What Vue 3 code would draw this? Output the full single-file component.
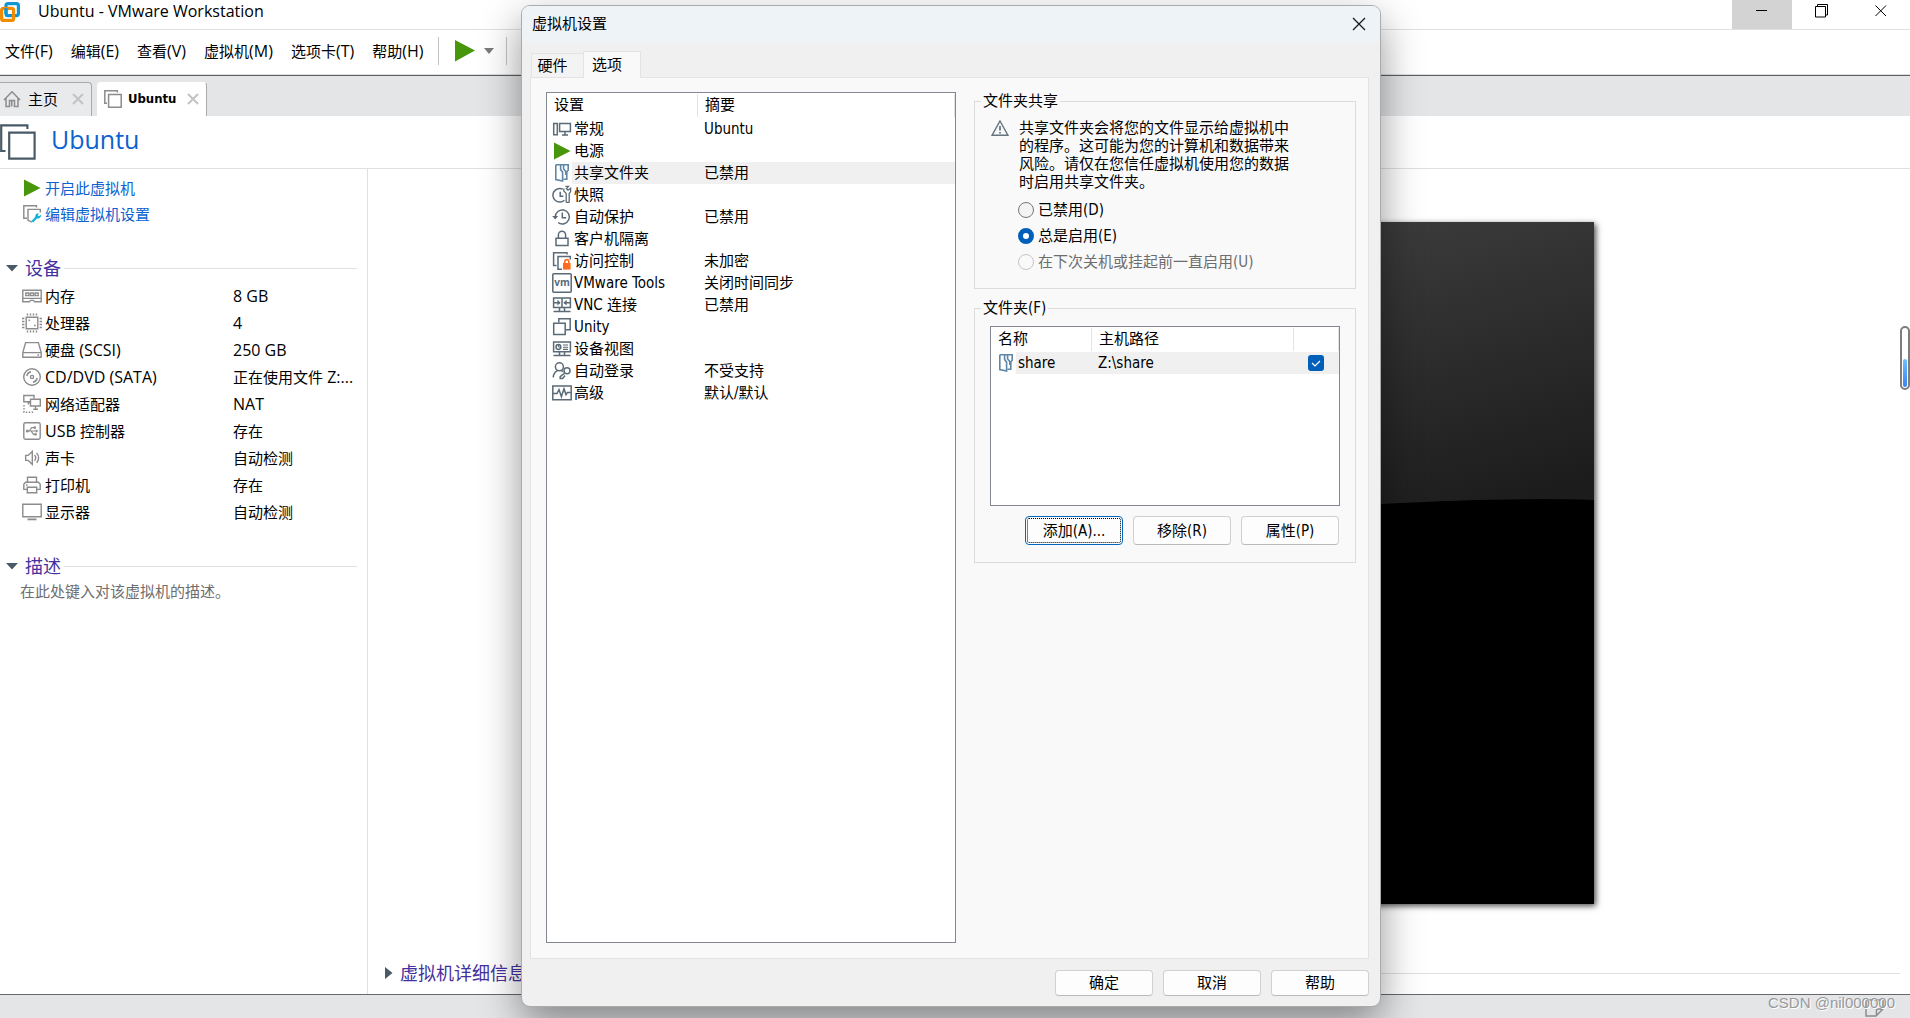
<script setup>
import { h, ref } from 'vue'

// Renders a label, wrapping its Latin runs so that they can have their own size.
const Txt = (props) =>
  h(
    'span',
    { class: 'txt' },
    props.t
      .split(/([\x20-\x7e]+)/)
      .filter(Boolean)
      .map((run) => (/^[\x20-\x7e]/.test(run) ? h('span', { class: 'latin' }, run) : run))
  )
Txt.props = ['t']

const menus = ['文件(F)', '编辑(E)', '查看(V)', '虚拟机(M)', '选项卡(T)', '帮助(H)']

const gray = 'fill="none" stroke="#8c8c8c" stroke-width="1.4"'
const slate = 'fill="none" stroke="#5a6a76" stroke-width="1.5"'

const folderIcon =
  '<g fill="none" stroke="#5f86a6" stroke-width="1.6"><path d="M3.8 1.8H16.2V7.2L14.8 8.8V16.2H11.4"/><path d="M3.8 1.8V16.6L10.6 18V9L8.6 6.6V1.8"/><path d="M11.6 2V6L13.8 8.6V12"/></g>'

const devices = [
  {
    name: '内存',
    value: '8 GB',
    icon: `<g ${gray}><path d="M.8 4.2H19.2V15.8H12.5L11.5 14.4H8.5L7.5 15.8H.8Z"/><path d="M1 12.4H19M3.8 7h3v2.6h-3zM8.5 7h3v2.6h-3zM13.2 7h3v2.6h-3z"/></g>`
  },
  {
    name: '处理器',
    value: '4',
    icon: `<g ${gray}><path d="M4.2 4.2H15.8V15.8H4.2Z"/><path d="M5.5 .5v2M8.5 .5v2M11.5 .5v2M14.5 .5v2M5.5 17.5v2M8.5 17.5v2M11.5 17.5v2M14.5 17.5v2M0 5.5h2.4M0 8.5h2.4M0 11.5h2.4M0 14.5h2.4M17.6 5.5H20M17.6 8.5H20M17.6 11.5H20M17.6 14.5H20M6.5 7.2h1.6M12 12.5h1.6"/></g>`
  },
  {
    name: '硬盘 (SCSI)',
    value: '250 GB',
    icon: `<g ${gray}><path d="M3.6 2.6H16.4L19.2 12.6V17.2H.8V12.6Z"/><path d="M1 12.6H19M15.5 15h1.6"/></g>`
  },
  {
    name: 'CD/DVD (SATA)',
    value: '正在使用文件 Z:...',
    icon: `<g ${gray}><circle cx="10" cy="10" r="8.3"/><circle cx="10" cy="10" r="1.6"/><path d="M4.8 9A5.3 5.3 0 0 1 9 4.8M15.2 11A5.3 5.3 0 0 1 11 15.2"/></g>`
  },
  {
    name: '网络适配器',
    value: 'NAT',
    icon: `<g ${gray}><path d="M8 7.8H1.8V1.5H12V4.5"/><path d="M8.5 5.3H18.3V12H8.5Z" fill="#fff"/><path d="M13.5 12V15.3H11.3M13.5 15.3H16M8 8.5H6.4M6.4 10.5V7.8"/><path d="M2 11v7.3h10.5" stroke-dasharray="1.5 1.5"/></g>`
  },
  {
    name: 'USB 控制器',
    value: '存在',
    icon: `<g ${gray}><rect x="1.8" y="1.8" width="16.4" height="16.4" rx="1.6"/><path d="M5 10H15M7.2 10L9.8 6.6H12.5M9 10L11.5 13.4H13.4" stroke-width="1.2"/></g><g fill="#8c8c8c"><circle cx="5.3" cy="10" r="1.5"/><circle cx="12.8" cy="6.6" r="1.3"/><path d="M12.4 12.2h2.4v2.4h-2.4zM13.8 8.3L16.4 10L13.8 11.7Z"/></g>`
  },
  {
    name: '声卡',
    value: '自动检测',
    icon: `<g ${gray}><path d="M3.7 7.4H6.2L10.3 3.4V16.4L6.2 12.4H3.7Z"/><path d="M12.5 7A4.4 4.4 0 0 1 12.5 12.8M14.6 5A7 7 0 0 1 14.6 14.8"/></g>`
  },
  {
    name: '打印机',
    value: '存在',
    icon: `<g ${gray}><path d="M5.5 7V2.2H14.5V7M5.2 14.4H1.8V9.2L3.6 7.2H16.4L18.2 9.2V14.4H14.8"/><path d="M5.3 12.2H14.7V17.8H5.3Z"/><path d="M4 10h1.5"/></g>`
  },
  {
    name: '显示器',
    value: '自动检测',
    icon: `<g ${gray}><path d="M.8 2.2H19.2V14.8H.8Z"/><path d="M5.5 17.4H14.5" stroke-width="1.8"/></g>`
  }
]

const playIcon = '<path d="M2 1.5L18.5 10L2 18.5Z" fill="#48960c"/>'
const editIcon = `<g ${gray}><path d="M5 14.2H1.8V1.7H14.5V3.6"/><path d="M10 18.2L6 16.4V5.4H18.3V8.6"/></g><path d="M10.3 17.8L15 12.8" stroke="#12b2d8" stroke-width="2.4"/><path d="M13.3 12.6A3 3 0 0 1 16.8 9.3L15.8 11.3L17 12.2L18.9 10.8A3 3 0 0 1 15 14.4Z" fill="#12b2d8"/>`

const settings = [
  {
    name: '常规',
    summary: 'Ubuntu',
    icon: `<g ${slate}><path d="M1.7 4.4H5.3V15.8H1.7Z"/><path d="M7.6 4.4H18.4V12.6H7.6ZM13 12.6V15.6M10 15.9H16"/></g>`
  },
  { name: '电源', summary: '', icon: playIcon },
  { name: '共享文件夹', summary: '已禁用', icon: folderIcon, selected: true },
  {
    name: '快照',
    summary: '',
    icon: `<g ${slate}><path d="M10.8 4.2A6.8 6.8 0 1 0 12.4 15.2"/><path d="M8.2 6.8V11.3H11.4"/><path d="M14.2 17.6V8.4L11.8 6V3.6M17.2 17.6V8.4L18.6 6.6V3.2L16 5.2L14.4 3.8L16.4 1.4H13.4M14.2 17.4H17.2" stroke-width="1.3"/></g>`
  },
  {
    name: '自动保护',
    summary: '已禁用',
    icon: `<g ${slate}><path d="M3.3 10A7 7 0 1 1 6.2 15.6"/><path d="M10.3 5.6V10.8H14.2"/></g><path d="M.2 9H6.2L3.2 12.6Z" fill="#5a6a76"/>`
  },
  {
    name: '客户机隔离',
    summary: '',
    icon: `<g ${slate}><path d="M4 9.2H16V16.6H4Z"/><path d="M6.4 9V5.8A3.6 3.6 0 0 1 13.6 5.8V9"/></g>`
  },
  {
    name: '访问控制',
    summary: '未加密',
    icon: `<g ${slate}><path d="M4.5 14.4H1.6V1.7H15V3.4"/><path d="M10 18.2H6V5.4H18.3V8.5"/></g><path d="M11 12H18.6V18.6H11Z" fill="#ff6a1c"/><path d="M12.8 12V10.6A2 2 0 0 1 16.8 10.6V12" fill="none" stroke="#ff6a1c" stroke-width="1.6"/>`
  },
  {
    name: 'VMware Tools',
    summary: '关闭时间同步',
    icon: `<rect x=".8" y=".8" width="18.4" height="18.4" rx="1" ${slate}/><text x="10" y="12.5" text-anchor="middle" font-family="Open Sans, sans-serif" font-weight="700" font-size="10" fill="#5a6a76">vm</text>`
  },
  {
    name: 'VNC 连接',
    summary: '已禁用',
    icon: `<g ${slate}><path d="M1.6 3H18.4V12.4H1.6ZM10 3V12.4M1.6 7.7H8M18.4 7.7H12M7.5 12.4V15.8M12.5 12.4V15.8M1.5 16.4H18.5"/></g><path d="M5.4 4.8L8.6 7.7L5.4 10.6ZM14.6 4.8L11.4 7.7L14.6 10.6Z" fill="#5a6a76"/>`
  },
  {
    name: 'Unity',
    summary: '',
    icon: `<g ${slate}><path d="M1.7 6.2H13.2V17.4H1.7Z"/><path d="M6.8 5.4V1.7H18.2V12.8H14"/></g>`
  },
  {
    name: '设备视图',
    summary: '',
    icon: `<g ${slate}><path d="M1.6 3H18.4V12.8H1.6Z"/><circle cx="6.4" cy="8" r="2.4"/><path d="M6.4 5V8H8.6" stroke-width="1"/><path d="M11 6H16M11 8.2H16M11 10.4H16" stroke-width="1.1"/><path d="M7.5 12.8V15.8M12.5 12.8V15.8M1.5 16.4H18.5"/></g>`
  },
  {
    name: '自动登录',
    summary: '不受支持',
    icon: `<g ${slate}><circle cx="7.4" cy="5.8" r="4"/><path d="M1.2 16.4C1.4 13 3 10.8 5.4 9.6M9.4 9.6L11 10.6"/><circle cx="15" cy="9.8" r="3"/><path d="M12.8 12L8.2 15.6V17.4H10.6L13 14.6"/></g>`
  },
  {
    name: '高级',
    summary: '默认/默认',
    icon: `<g ${slate}><path d="M.8 3H19.2V16.8H.8Z"/><path d="M1 10.6H5L7 6.6L9.4 13.6L12 5.8L14 11.6L15.4 9.6H19"/></g>`
  }
]

const sharing = ref('always')
const modes = [
  { id: 'off', label: '已禁用(D)' },
  { id: 'always', label: '总是启用(E)' },
  { id: 'until', label: '在下次关机或挂起前一直启用(U)', disabled: true }
]
const folderOn = ref(true)
</script>

<template>
  <div class="app">
    <header class="titlebar">
      <svg class="logo" width="20" height="20" viewBox="0 0 20 20">
        <rect x="6" y="1.6" width="12.4" height="12" rx="2" fill="none" stroke="#1296d3" stroke-width="3.2" />
        <rect x="1.6" y="6.4" width="12" height="12" rx="2" fill="none" stroke="#f38b00" stroke-width="3.2" />
        <path d="M6 12V6" stroke="#1296d3" stroke-width="3.2" />
        <path d="M5 13.6H10" stroke="#1296d3" stroke-width="1.6" />
      </svg>
      <h1>Ubuntu - VMware Workstation</h1>
      <div class="win-buttons">
        <button type="button" class="active" aria-label="最小化">
          <svg width="14" height="14" viewBox="0 0 14 14"><path d="M1 6.5H12" stroke="#000" /></svg>
        </button>
        <button type="button" aria-label="还原">
          <svg width="14" height="14" viewBox="0 0 14 14" fill="none" stroke="#000"><path d="M.5 2.5h10v10.5h-10zM2.5 2.5V.5h10V11H10.5" /></svg>
        </button>
        <button type="button" aria-label="关闭">
          <svg width="14" height="14" viewBox="0 0 14 14"><path d="M1.5 1.5L12 12M12 1.5L1.5 12" stroke="#000" /></svg>
        </button>
      </div>
    </header>

    <nav class="menubar">
      <button v-for="m in menus" :key="m" type="button"><Txt :t="m" /></button>
      <span class="sep"></span>
      <button type="button" class="power" aria-label="开启">
        <svg width="20" height="22" viewBox="0 0 20 22"><path d="M0 0L20 10.5L0 21.5Z" fill="#48960c" /></svg>
        <svg width="10" height="6" viewBox="0 0 10 6"><path d="M0 0H10L5 6Z" fill="#7a7a7a" /></svg>
      </button>
      <span class="sep"></span>
    </nav>

    <div class="tabbar">
      <div class="tab home">
        <svg width="18" height="18" viewBox="0 0 18 18" fill="none" stroke="#8c8c8c" stroke-width="1.5"><path d="M1 10L9 1.8L17 10M3 8.5V16.5H6.5V10.5H11.5V16.5H15V8.5M8.8 10.5v6" /></svg>
        <span>主页</span>
        <svg class="x" width="12" height="12" viewBox="0 0 12 12"><path d="M1 1L11 11M11 1L1 11" stroke="#c4c4c4" stroke-width="2" /></svg>
      </div>
      <div class="tab current">
        <svg width="18" height="18" viewBox="0 0 18 18" fill="none" stroke="#8c8c8c" stroke-width="1.5"><path d="M3 13.3H.8V.8H13.3V2.5" /><path d="M4.6 4.4H17.2V17.2H4.6Z" /></svg>
        <b>Ubuntu</b>
        <svg class="x" width="12" height="12" viewBox="0 0 12 12"><path d="M1 1L11 11M11 1L1 11" stroke="#c4c4c4" stroke-width="2" /></svg>
      </div>
    </div>

    <div class="vm-head">
      <svg width="36" height="36" viewBox="0 0 36 36" fill="none" stroke="#4a5a66" stroke-width="2.2"><path d="M5.5 27H1.2V1.4H27.4V5" /><path d="M9.2 8.6H34.6V34.6H9.2Z" /></svg>
      <h2>Ubuntu</h2>
    </div>

    <main class="body">
      <aside class="side">
        <a href="#" class="action"><svg width="20" height="20" viewBox="0 0 20 20" v-html="playIcon"></svg>开启此虚拟机</a>
        <a href="#" class="action"><svg width="20" height="20" viewBox="0 0 20 20" v-html="editIcon"></svg>编辑虚拟机设置</a>

        <h3 class="section">
          <svg width="12" height="8" viewBox="0 0 12 8"><path d="M0 1H12L6 7.5Z" fill="#4a5a66" /></svg>
          <span>设备</span>
        </h3>
        <dl class="devices">
          <div v-for="d in devices" :key="d.name">
            <dt><svg width="20" height="20" viewBox="0 0 20 20" v-html="d.icon"></svg><Txt :t="d.name" /></dt>
            <dd><Txt :t="d.value" /></dd>
          </div>
        </dl>

        <h3 class="section">
          <svg width="12" height="8" viewBox="0 0 12 8"><path d="M0 1H12L6 7.5Z" fill="#4a5a66" /></svg>
          <span>描述</span>
        </h3>
        <p class="desc">在此处键入对该虚拟机的描述。</p>
      </aside>

      <section class="stage">
        <svg class="preview" viewBox="0 0 909 682" preserveAspectRatio="none">
          <defs>
            <linearGradient id="gloss" gradientUnits="userSpaceOnUse" x1="700" y1="-40" x2="800" y2="290">
              <stop offset="0" stop-color="#3f3f3f" />
              <stop offset="1" stop-color="#1c1c1c" />
            </linearGradient>
          </defs>
          <rect width="909" height="682" fill="#000" />
          <path d="M0 0H909V278Q823 275 696 282Q400 300 0 390Z" fill="url(#gloss)" />
        </svg>
        <h3 class="section details">
          <svg width="8" height="12" viewBox="0 0 8 12"><path d="M0 0L7.5 6L0 12Z" fill="#4a5a66" /></svg>
          <span>虚拟机详细信息</span>
        </h3>
        <div class="gauge"><i></i></div>
      </section>
    </main>

    <footer class="status">
      <svg width="19" height="18" viewBox="0 0 19 18" fill="none" stroke="#8c8c8c" stroke-width="1.5"><path d="M1 1H18V10L11 17H1ZM18 10H11.5V17" /></svg>
      <span class="mark">CSDN @nil000000</span>
    </footer>

    <div class="dialog" role="dialog" aria-label="虚拟机设置">
      <div class="dlg-title">
        <span>虚拟机设置</span>
        <button type="button" aria-label="关闭">
          <svg width="14" height="14" viewBox="0 0 14 14"><path d="M1 1L13 13M13 1L1 13" stroke="#1a1a1a" stroke-width="1.3" /></svg>
        </button>
      </div>

      <div class="dlg-tabs">
        <button type="button">硬件</button>
        <button type="button" class="on">选项</button>
      </div>

      <div class="pane">
        <div class="listbox">
          <table class="options">
            <colgroup><col class="c-icon" /><col class="c-name" /><col /></colgroup>
            <thead>
              <tr><th colspan="2"><span>设置</span></th><th><span>摘要</span></th></tr>
            </thead>
            <tbody>
              <tr v-for="s in settings" :key="s.name" :class="{ sel: s.selected }">
                <td class="ic"><svg width="20" height="20" viewBox="0 0 20 20" v-html="s.icon"></svg></td>
                <td><Txt :t="s.name" /></td>
                <td class="sum"><Txt :t="s.summary" /></td>
              </tr>
            </tbody>
          </table>
        </div>

        <div class="right">
          <fieldset class="share">
            <legend>文件夹共享</legend>
            <div class="warn">
              <svg width="18" height="18" viewBox="0 0 18 18" fill="none" stroke="#66747f" stroke-width="1.4"><path d="M9 2L17 16.3H1Z" /><path d="M9 7v4.6M9 13v1.6" stroke-width="1.8" /></svg>
              <p>共享文件夹会将您的文件显示给虚拟机中的程序。这可能为您的计算机和数据带来风险。请仅在您信任虚拟机使用您的数据时启用共享文件夹。</p>
            </div>
            <label v-for="m in modes" :key="m.id" class="radio" :class="{ off: m.disabled }">
              <input type="radio" name="sharing" :value="m.id" v-model="sharing" :disabled="m.disabled" />
              <Txt :t="m.label" />
            </label>
          </fieldset>

          <fieldset class="folders">
            <legend><Txt t="文件夹(F)" /></legend>
            <div class="listbox small">
              <table class="options">
                <colgroup><col class="c-icon" /><col class="c-fname" /><col class="c-path" /><col /></colgroup>
                <thead>
                  <tr><th colspan="2"><span>名称</span></th><th><span>主机路径</span></th><th aria-label="已启用"><span></span></th></tr>
                </thead>
                <tbody>
                  <tr class="sel">
                    <td class="ic"><svg width="20" height="20" viewBox="0 0 20 20" v-html="folderIcon"></svg></td>
                    <td><Txt t="share" /></td>
                    <td class="sum"><Txt t="Z:\share" /></td>
                    <td class="ck"><input v-model="folderOn" type="checkbox" aria-label="share" /></td>
                  </tr>
                </tbody>
              </table>
            </div>
            <div class="row-buttons">
              <button type="button" class="btn focus"><Txt t="添加(A)..." /></button>
              <button type="button" class="btn"><Txt t="移除(R)" /></button>
              <button type="button" class="btn"><Txt t="属性(P)" /></button>
            </div>
          </fieldset>
        </div>
      </div>

      <div class="dlg-foot">
        <button type="button" class="btn">确定</button>
        <button type="button" class="btn">取消</button>
        <button type="button" class="btn">帮助</button>
      </div>
    </div>
  </div>
</template>

<style>
body {
  margin: 0;
}
.latin {
  font-size: var(--latin);
}
.txt {
  white-space: pre;
}
</style>

<style scoped>
.app {
  --latin: 16px;
  position: relative;
  display: flex;
  flex-direction: column;
  min-height: 100vh;
  overflow: hidden;
  background: #fff;
  color: #000;
  font: 15px/20px "Open Sans", "Noto Sans CJK SC", sans-serif;
}
button {
  margin: 0;
  padding: 0;
  border: 0;
  background: none;
  color: inherit;
  font: inherit;
}
svg {
  display: block;
  flex: none;
}
h1, h2, h3, p, dl, dd {
  margin: 0;
  font-weight: 400;
}

.titlebar {
  display: flex;
  align-items: flex-start;
  height: 29px;
  border-bottom: 1px solid #e0e0e0;
}
.logo {
  margin-top: 2px;
}
.titlebar h1 {
  flex: 1;
  padding-left: 18px;
  font-size: 16px;
  line-height: 22px;
}
.win-buttons {
  display: flex;
}
.win-buttons button {
  display: flex;
  justify-content: center;
  width: 59px;
  height: 29px;
  padding-top: 4px;
}
.win-buttons .active {
  width: 60px;
  background: #d3d3d3;
}

.menubar {
  display: flex;
  align-items: center;
  box-sizing: border-box;
  height: 45px;
  padding: 0 0 2px 5px;
  border-bottom: 1px solid #dcdcdc;
}
.menubar button {
  margin-right: 18px;
}
.menubar .sep {
  width: 1px;
  height: 28px;
  margin-left: -3px;
  background: #c4c4c4;
}
.menubar .power {
  display: flex;
  align-items: center;
  gap: 9px;
  margin: 0 15px 0 16px;
}

.tabbar {
  display: flex;
  gap: 5px;
  height: 34px;
  padding-top: 6px;
  border-top: 1px solid #5f6063;
  background: #e4e5e7;
}
.tab {
  display: flex;
  align-items: center;
  box-sizing: border-box;
  padding-bottom: 2px;
  border-top: 1px solid #a8a9ab;
  border-right: 1px solid #a8a9ab;
  border-radius: 0 4px 0 0;
}
.tab.home {
  width: 92px;
  padding-left: 3px;
  gap: 7px;
  background: #e9eaec;
}
.tab.current {
  width: 110px;
  padding-left: 7px;
  gap: 6px;
  border-top-color: #fff;
  border-radius: 4px 4px 0 0;
  background: #fff;
}
.tab b {
  font: 700 13px/20px "DejaVu Sans Condensed", sans-serif;
}
.tab .x {
  margin: 0 7px 0 auto;
}

.vm-head {
  display: flex;
  align-items: center;
  gap: 15px;
  height: 52px;
  border-bottom: 1px solid #e0e0e0;
}
.vm-head h2 {
  padding-bottom: 6px;
  color: #0b62d0;
  font-size: 25px;
  line-height: 34px;
}

.body {
  display: flex;
  flex: 1;
}
.side {
  box-sizing: border-box;
  width: 368px;
  padding: 6px 10px 0 22px;
  border-right: 1px solid #e0e0e0;
}
.action {
  display: flex;
  align-items: center;
  gap: 3px;
  height: 26px;
  color: #0b62d0;
  text-decoration: none;
}
.section {
  display: flex;
  align-items: center;
  gap: 7px;
  height: 26px;
  margin: 28px 0 0 -16px;
  color: #44309e;
  font-size: 18px;
  line-height: 26px;
}
.section::after {
  content: "";
  flex: 1;
  height: 1px;
  margin-left: -4px;
  background: #e0e0e0;
}
.devices {
  padding-top: 1px;
}
.devices > div {
  display: flex;
  align-items: center;
  height: 27px;
}
.devices dt {
  display: flex;
  align-items: center;
  gap: 3px;
  width: 211px;
}
.devices dd {
  white-space: nowrap;
}
.desc {
  margin-left: -2px;
  color: #6e6e6e;
  line-height: 24px;
}

.stage {
  position: relative;
  display: flex;
  flex: 1;
  flex-direction: column;
  align-items: center;
  padding-top: 53px;
}
.preview {
  flex: 1;
  width: 909px;
  max-width: 100%;
  margin-bottom: 56px;
  box-shadow: 2px 2px 6px rgba(0, 0, 0, 0.7);
}
.section.details {
  align-self: stretch;
  margin: 0 10px 8px 17px;
}
.gauge {
  position: absolute;
  top: 157px;
  right: 0;
  box-sizing: border-box;
  width: 10px;
  height: 64px;
  padding: 0 1px 1px;
  display: flex;
  align-items: flex-end;
  border: 2px solid #7d7d7d;
  border-radius: 5px;
  background: #fff;
}
.gauge i {
  flex: 1;
  height: 28px;
  border-radius: 2px;
  background: linear-gradient(#6cc0ff, #3a84f5);
}

.status {
  display: flex;
  align-items: flex-start;
  justify-content: flex-end;
  box-sizing: border-box;
  height: 24px;
  padding: 4px 26px 0 0;
  border-top: 1px solid #66676a;
  background: #e4e5e7;
}
.mark {
  position: absolute;
  right: 15px;
  bottom: 5px;
  color: #98999b;
  font: 15px/20px "Liberation Sans", sans-serif;
  text-shadow: 1px 1px 0 #fff;
}

.dialog {
  --latin: 15px;
  position: absolute;
  top: 5px;
  bottom: 11px;
  left: 521px;
  display: flex;
  flex-direction: column;
  box-sizing: border-box;
  width: 860px;
  overflow: hidden;
  border: 1px solid #a9abad;
  border-radius: 9px;
  background: #f0f0f0;
  box-shadow: 0 16px 40px rgba(0, 0, 0, 0.42);
  font-family: "DejaVu Sans Condensed", "Noto Sans CJK SC", sans-serif;
}
.dlg-title {
  display: flex;
  align-items: center;
  justify-content: space-between;
  box-sizing: border-box;
  height: 37px;
  padding: 0 14px 2px 10px;
  background: #eef3f8;
}
.dlg-tabs {
  display: flex;
  align-items: flex-end;
  height: 34px;
  padding-left: 9px;
}
.dlg-tabs button {
  box-sizing: border-box;
  width: 52px;
  height: 24px;
  padding-right: 10px;
  border: 1px solid #e3e3e3;
  border-width: 1px 0 0 1px;
  background: #f3f3f3;
}
.dlg-tabs .on {
  position: relative;
  z-index: 1;
  width: 58px;
  height: 27px;
  margin-bottom: -1px;
  border-width: 1px 1px 0;
  background: #f9f9f9;
}
.pane {
  display: flex;
  flex: 1;
  gap: 18px;
  margin: 0 11px 0 8px;
  padding: 14px 12px 15px 15px;
  border: 1px solid #e3e3e3;
  background: #f9f9f9;
}
.listbox {
  box-sizing: border-box;
  flex: none;
  width: 410px;
  border: 1px solid #828790;
  background: #fff;
}
.options {
  width: 100%;
  border-collapse: collapse;
  table-layout: fixed;
}
.c-icon { width: 25px; }
.c-name { width: 126px; }
.c-fname { width: 76px; }
.c-path { width: 202px; }
.options th {
  height: 25px;
  padding: 1px 0;
  box-sizing: border-box;
  font-weight: 400;
  text-align: left;
}
.options th span {
  display: block;
  height: 23px;
  line-height: 23px;
  padding-left: 7px;
  border-right: 1px solid #e3e3e3;
}
.options td {
  height: 22px;
  padding: 0 0 0 2px;
  line-height: 22px;
}
.options td.ic {
  padding-left: 5px;
}
.options td.sum {
  padding-left: 6px;
}
.options .sel td:not(.ic) {
  background: #f0f0f0;
}
.right {
  flex: 1;
}
fieldset {
  box-sizing: border-box;
  min-width: 0;
  margin: 0;
  padding: 0 15px;
  border: 1px solid #dcdcdc;
}
legend {
  margin-left: -9px;
  padding: 0 2px;
  line-height: 18px;
}
.share {
  height: 197px;
}
.warn {
  display: flex;
  gap: 10px;
  padding: 9px 0 6px 1px;
}
.warn p {
  width: 276px;
  line-height: 18px;
}
.radio {
  display: flex;
  align-items: center;
  gap: 4px;
  height: 26px;
  padding-left: 28px;
}
.radio input {
  appearance: none;
  box-sizing: border-box;
  width: 16px;
  height: 16px;
  margin: 0;
  border: 1px solid #767676;
  border-radius: 50%;
  background: #f3f3f3;
}
.radio input:checked {
  border: 5px solid #005fb8;
  background: #fff;
}
.radio.off {
  color: #6d6d6d;
}
.radio.off input {
  border-color: #c6c6c6;
  background: #f9f9f9;
}
.folders {
  height: 264px;
  margin-top: 10px;
}
.small {
  width: 100%;
  height: 180px;
  margin-top: 9px;
}
.options td.ck {
  padding-left: 14px;
}
.ck input {
  appearance: none;
  display: block;
  width: 16px;
  height: 16px;
  margin: 0;
  border-radius: 3px;
  background: #005fb8 url("data:image/svg+xml,%3Csvg xmlns='http://www.w3.org/2000/svg' viewBox='0 0 16 16'%3E%3Cpath d='M4 8l3 3 5-5' fill='none' stroke='%23fff' stroke-width='1.2'/%3E%3C/svg%3E");
}
.row-buttons {
  display: flex;
  justify-content: flex-end;
  gap: 10px;
  margin-top: 10px;
  padding-right: 1px;
}
.btn {
  box-sizing: border-box;
  width: 98px;
  height: 26px;
  border: 1px solid #d0d0d0;
  border-bottom-color: #bababa;
  border-radius: 4px;
  background: #fdfdfd;
}
.row-buttons .btn {
  height: 29px;
}
.btn.focus {
  border-color: #0067c0;
  outline: 1px dotted #000;
  outline-offset: -3px;
}
.dlg-foot {
  display: flex;
  justify-content: flex-end;
  gap: 10px;
  padding: 11px 11px 10px;
}
</style>
